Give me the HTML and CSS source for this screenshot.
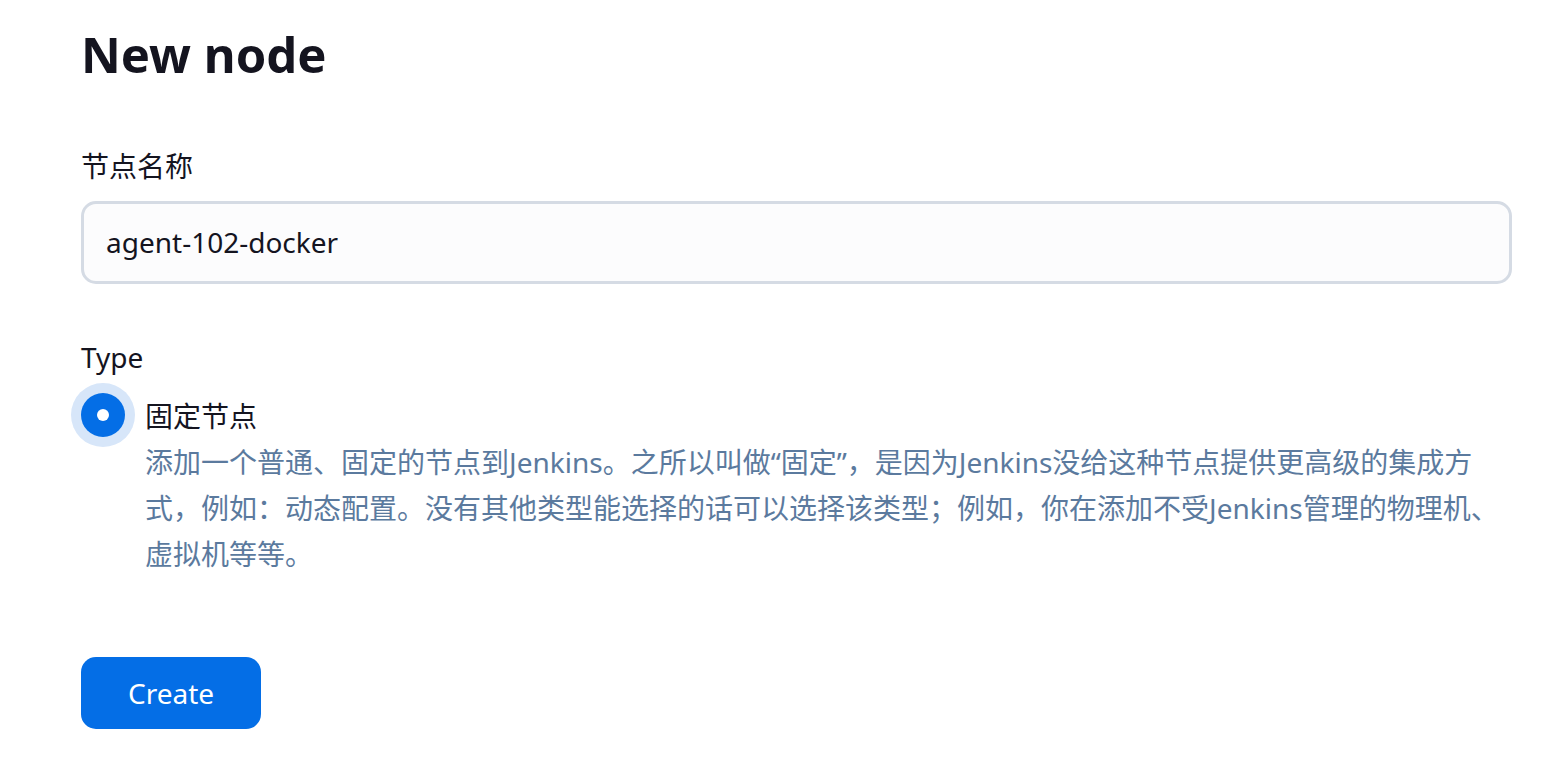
FILE: index.html
```html
<!DOCTYPE html>
<html lang="zh-CN">
<head>
  <meta charset="UTF-8" />
  <meta name="viewport" content="width=device-width, initial-scale=1" />
  <title>New node</title>
  <link rel="stylesheet" href="styles.css">
</head>
<body>
  <main class="pagina">
    <h1>New node</h1>

    <!-- Nombre del nodo -->
    <div class="campo">
      <label class="etiqueta" for="nombreNodo">节点名称</label>
      <input class="entrada" id="nombreNodo" type="text" value="agent-102-docker">
    </div>

    <!-- Tipo -->
    <div class="campo">
      <div class="etiqueta etiqueta-tipo">Type</div>
      <label class="opcion">
        <input type="radio" name="tipo" checked>
        <span class="opcion-texto">
          <span class="opcion-titulo">固定节点</span>
          <span class="opcion-desc">添加一个普通、固定的节点到Jenkins。之所以叫做“固定”，是因为Jenkins没给这种节点提供更高级的集成方式，例如：动态配置。没有其他类型能选择的话可以选择该类型；例如，你在添加不受Jenkins管理的物理机、虚拟机等等。</span>
        </span>
      </label>
    </div>

    <button class="boton" type="button">Create</button>
  </main>
</body>
</html>
```

FILE: styles.css
```css
/* ---------- Variables ---------- */
:root{
  --texto:#14141f;
  --texto-sec:#5b7a9e;
  --acento:#046ee6;
  --halo:#d7e6f9;
  --borde:#d5dbe4;
  --fondo-entrada:#fcfcfd;
}
*{box-sizing:border-box}
body{
  margin:0;
  font-family:"Noto Sans","Noto Sans CJK SC",sans-serif;
  color:var(--texto);
  background:#fff;
}

/* ---------- Contenedor ---------- */
.pagina{
  padding:23px 43px 40px 81px;
}
h1{
  margin:0 0 60px;
  font-size:49px;
  font-weight:700;
  line-height:1.3;
}

/* ---------- Campos ---------- */
.campo{margin-bottom:54px}
.etiqueta{
  display:block;
  font-size:28px;
  line-height:38px;
  margin-bottom:16px;
}
.etiqueta-tipo{margin-bottom:17px}
.entrada{
  display:block;
  width:100%;
  height:83px;
  padding:0 22px;
  font:inherit;
  font-size:28px;
  color:var(--texto);
  background:var(--fondo-entrada);
  border:3px solid var(--borde);
  border-radius:15px;
  outline:none;
}

/* ---------- Radio ---------- */
.opcion{
  display:flex;
  gap:20px;
  align-items:flex-start;
  margin-left:-10px;
}
.opcion input{
  appearance:none;
  -webkit-appearance:none;
  flex:none;
  width:44px;height:44px;
  margin:0 0 0 10px;
  border-radius:50%;
  background:var(--acento);
  box-shadow:0 0 0 10px var(--halo);
  position:relative;
}
.opcion input::after{
  content:"";
  position:absolute;
  left:16px;top:16px;
  width:12px;height:12px;
  border-radius:50%;
  background:#fff;
}
.opcion-texto{display:flex;flex-direction:column;max-width:1366px}
.opcion-titulo{font-size:28px;line-height:46px}
.opcion-desc{
  font-size:28px;
  line-height:46px;
  color:var(--texto-sec);
}

/* ---------- Botón ---------- */
.boton{
  margin-top:26px;
  width:180px;height:72px;
  border:none;
  border-radius:15px;
  background:var(--acento);
  color:#fff;
  font:inherit;
  font-size:28px;
}
```
